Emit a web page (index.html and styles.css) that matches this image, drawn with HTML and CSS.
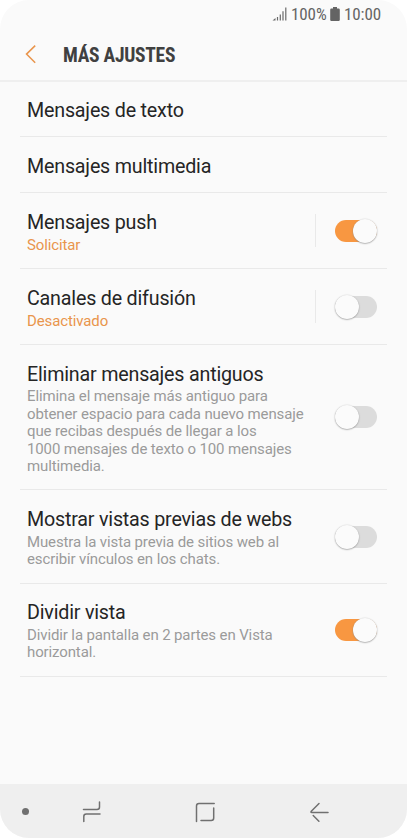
FILE: index.html
```html
<!DOCTYPE html>
<html lang="es">
<head>
<meta charset="utf-8">
<title>Más ajustes</title>
<link rel="stylesheet" href="styles.css">
</head>
<body>
<div class="phone">
  <div class="status">
    <svg class="signal" width="15" height="14" viewBox="0 0 15 14"><path d="M.5 13.500h3v-2.500z" fill="#696969"/><path d="M5.500 13.500V10M8.300 13.500V7.500M11 13.500V4.200M13.800 13.500V.5" stroke="#696969" stroke-width="1.200"/></svg>
    <span class="battery-text">100%</span>
    <svg class="battery" width="10" height="14" viewBox="0 0 10 14"><path d="M3 0h4v1.500h1.600q1.200 0 1.200 1.200v10q0 1.300-1.200 1.300H1.400Q.2 14 .2 12.700v-10Q.2 1.500 1.400 1.500H3z" fill="#646464"/></svg>
    <span class="clock">10:00</span>
  </div>
  <header class="header">
    <svg class="back" width="12" height="20" viewBox="0 0 12 20"><path d="M10.200 1.600L1.500 10.100l8.700 8.600" fill="none" stroke="#e9954c" stroke-width="1.500"/></svg>
    <h1 class="title">MÁS AJUSTES</h1>
  </header>
  <main class="list">
    <section class="row simple first"><div class="text"><h2>Mensajes de texto</h2></div></section>
    <section class="row simple"><div class="text"><h2>Mensajes multimedia</h2></div></section>
    <section class="row double"><div class="text"><h2>Mensajes push</h2><p class="accent">Solicitar</p></div><div class="separator"></div><div class="switch on"><i></i></div></section>
    <section class="row double"><div class="text"><h2>Canales de difusión</h2><p class="accent">Desactivado</p></div><div class="separator"></div><div class="switch"><i></i></div></section>
    <section class="row long"><div class="text"><h2>Eliminar mensajes antiguos</h2><p>Elimina el mensaje más antiguo para<br>obtener espacio para cada nuevo mensaje<br>que recibas después de llegar a los<br>1000 mensajes de texto o 100 mensajes<br>multimedia.</p></div><div class="switch"><i></i></div></section>
    <section class="row medium"><div class="text"><h2>Mostrar vistas previas de webs</h2><p>Muestra la vista previa de sitios web al<br>escribir vínculos en los chats.</p></div><div class="switch"><i></i></div></section>
    <section class="row last"><div class="text"><h2>Dividir vista</h2><p>Dividir la pantalla en 2 partes en Vista<br>horizontal.</p></div><div class="switch on"><i></i></div></section>
  </main>
  <nav class="nav">
    <span class="dot"></span>
    <svg class="recents" width="20" height="22" viewBox="0 0 20 22"><path d="M17.500 1v5q0 2.500-2.500 2.500H1.500M18 13H4.300q-2.500 0-2.500 2.500V20.500"/></svg>
    <svg class="home" width="21" height="21" viewBox="0 0 21 21"><path d="M1.500 19.500V4q0-2.500 2.500-2.500h15.200M18.700 6V16q0 2.500-2.500 2.500H6"/></svg>
    <svg class="return" width="20" height="21" viewBox="0 0 20 21"><path d="M10 1.500L2.300 9.200q-.9 1.300.5 1.300H19M4.200 13.500l5.700 5.700"/></svg>
  </nav>
</div>
</body>
</html>
```

FILE: styles.css
```css
* { box-sizing: border-box; }
body { margin: 0; background: #fff; font-family: Roboto, sans-serif; }
h1, h2, p { margin: 0; font-weight: 400; white-space: nowrap; }
svg { display: block; flex: none; }
.phone { width: 407px; height: 838px; display: flex; flex-direction: column; background: #fafafa; border-radius: 29px; overflow: hidden; }
.status { height: 29px; flex: none; display: flex; align-items: center; padding-left: 272px; color: #646464; font-size: 17px; line-height: 29px; }
.signal { margin-top: -1px; }
.battery-text { width: 35px; margin-left: 4px; font-stretch: 75%; letter-spacing: -.1px; white-space: nowrap; }
.battery { margin: -1px 4px 0 4px; }
.clock { font-stretch: 75%; letter-spacing: -.1px; }
.header { height: 53px; flex: none; display: flex; align-items: center; padding: 0 0 1px 25px; border-bottom: 2px solid #efefef; }
.title { margin: 2px 0 0 26px; font-size: 19.500px; letter-spacing: -.27px; font-weight: 700; font-stretch: 75%; color: #404040; }
.list { flex: 1; padding: 0 20px; }
.row { display: flex; align-items: center; border-bottom: 1px solid #e9e9e9; padding: 0 10px 0 7px; }
.text { flex: 1; align-self: flex-start; padding-top: 17px; }
.simple { height: 56px; }
.first { height: 55px; }
.first .text { padding-top: 16px; }
.double { height: 76px; }
.long { height: 145px; }
.medium { height: 94px; }
.last { height: 93px; }
.last .text { padding-top: 16px; }
h2 { font-size: 19.700px; line-height: 26px; letter-spacing: -.2px; color: #252525; }
p { font-size: 15px; line-height: 17.400px; letter-spacing: -.12px; color: #9b9b9b; padding-top: .4px; }
.double p { padding-top: 1px; }
.medium p, .last p { padding-top: 1px; }
.accent { color: #e9954c; }
.separator { width: 1.500px; height: 33px; background: #e9e9e9; margin-right: 18.500px; }
.switch { width: 42.500px; height: 22px; border-radius: 11px; background: #dcdcdc; display: flex; align-items: center; flex: none; }
.switch i { width: 24px; height: 24px; flex: none; border-radius: 50%; background: #fbfbfb; box-shadow: 0 .5px 1.500px 0 #888; }
.on { background: #f89741; justify-content: flex-end; }
.nav { height: 54px; flex: none; display: flex; align-items: center; background: #efefef; padding-left: 22px; }
.nav path { fill: none; stroke: #707070; stroke-width: 1.500; stroke-linecap: round; }
.dot { width: 7px; height: 7px; border-radius: 50%; background: #707070; }
.recents { margin: 2px 0 0 53px; }
.home { margin: 2px 0 0 93px; }
.return { margin: 2px 0 0 93px; }
```
